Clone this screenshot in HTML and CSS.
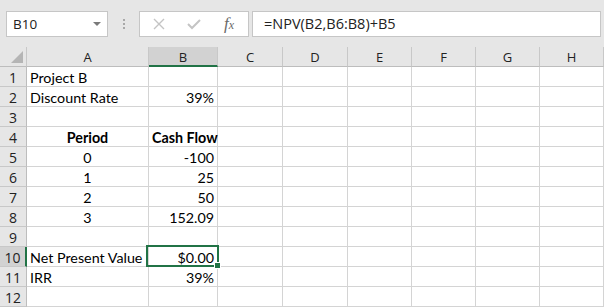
FILE: index.html
```html
<!DOCTYPE html>
<html lang="en">
<head>
    <meta charset="UTF-8">
    <title>NPV - Excel</title>
    <link rel="stylesheet" href="styles.css">
</head>
<body>
    <div class="formula-bar">
        <div class="name-box">
            <span>B10</span>
            <span class="drop-arrow"></span>
        </div>
        <div class="grip"><i></i><i></i><i></i></div>
        <div class="fx-buttons">
            <svg class="btn-icon" width="12" height="12" viewBox="0 0 12 12">
                <path d="M1 1 L11 11 M11 1 L1 11" stroke="#c4c4c4" stroke-width="1.4" fill="none"/>
            </svg>
            <svg class="btn-icon" width="14" height="12" viewBox="0 0 14 12">
                <path d="M1 6 L5 10 L13 2" stroke="#c4c4c4" stroke-width="2" fill="none"/>
            </svg>
            <span class="fx">f<sub>x</sub></span>
        </div>
        <div class="formula-input">=NPV(B2,B6:B8)+B5</div>
    </div>

    <div class="sheet">
        <div class="hd corner"><span class="corner-tri"></span></div>
        <div class="hd">A</div>
        <div class="hd active-col">B</div>
        <div class="hd">C</div>
        <div class="hd">D</div>
        <div class="hd">E</div>
        <div class="hd">F</div>
        <div class="hd">G</div>
        <div class="hd">H</div>

        <div class="rh">1</div><div class="c">Project B</div><div class="c"></div><div class="c"></div><div class="c"></div><div class="c"></div><div class="c"></div><div class="c"></div><div class="c"></div>
        <div class="rh">2</div><div class="c">Discount Rate</div><div class="c num">39%</div><div class="c"></div><div class="c"></div><div class="c"></div><div class="c"></div><div class="c"></div><div class="c"></div>
        <div class="rh">3</div><div class="c"></div><div class="c"></div><div class="c"></div><div class="c"></div><div class="c"></div><div class="c"></div><div class="c"></div><div class="c"></div>
        <div class="rh">4</div><div class="c mid bold">Period</div><div class="c mid bold">Cash Flow</div><div class="c"></div><div class="c"></div><div class="c"></div><div class="c"></div><div class="c"></div><div class="c"></div>
        <div class="rh">5</div><div class="c mid">0</div><div class="c num">-100</div><div class="c"></div><div class="c"></div><div class="c"></div><div class="c"></div><div class="c"></div><div class="c"></div>
        <div class="rh">6</div><div class="c mid">1</div><div class="c num">25</div><div class="c"></div><div class="c"></div><div class="c"></div><div class="c"></div><div class="c"></div><div class="c"></div>
        <div class="rh">7</div><div class="c mid">2</div><div class="c num">50</div><div class="c"></div><div class="c"></div><div class="c"></div><div class="c"></div><div class="c"></div><div class="c"></div>
        <div class="rh">8</div><div class="c mid">3</div><div class="c num">152.09</div><div class="c"></div><div class="c"></div><div class="c"></div><div class="c"></div><div class="c"></div><div class="c"></div>
        <div class="rh">9</div><div class="c"></div><div class="c"></div><div class="c"></div><div class="c"></div><div class="c"></div><div class="c"></div><div class="c"></div><div class="c"></div>
        <div class="rh active-row">10</div><div class="c">Net Present Value</div><div class="c num selected">$0.00</div><div class="c"></div><div class="c"></div><div class="c"></div><div class="c"></div><div class="c"></div><div class="c"></div>
        <div class="rh">11</div><div class="c">IRR</div><div class="c num">39%</div><div class="c"></div><div class="c"></div><div class="c"></div><div class="c"></div><div class="c"></div><div class="c"></div>
        <div class="rh">12</div><div class="c"></div><div class="c"></div><div class="c"></div><div class="c"></div><div class="c"></div><div class="c"></div><div class="c"></div><div class="c"></div>
    </div>
</body>
</html>
```

FILE: styles.css
```css
body {
  margin: 0;
  padding: 0;
  background: #ffffff;
  font-family: Lato, "Liberation Sans", sans-serif;
  color: #000;
  width: 604px;
  height: 307px;
  overflow: hidden;
}

.formula-bar {
  height: 47px;
  background: #e6e6e6;
  display: flex;
  align-items: flex-start;
  padding: 11px 3px 0 6px;
  box-sizing: border-box;
}

.name-box {
  width: 102px;
  height: 26px;
  box-sizing: border-box;
  background: #fff;
  border: 1px solid #c6c6c6;
  display: flex;
  align-items: center;
  justify-content: space-between;
  padding: 0 6px 0 6px;
  font-family: "Open Sans", "Liberation Sans", sans-serif;
  font-size: 13.5px;
  color: #222;
}

.drop-arrow {
  width: 0;
  height: 0;
  border-left: 4px solid transparent;
  border-right: 4px solid transparent;
  border-top: 4px solid #7a7a7a;
}

.grip {
  width: 31px;
  display: flex;
  flex-direction: column;
  align-items: center;
  gap: 2px;
  padding-top: 8px;
}

.grip i {
  display: block;
  width: 2px;
  height: 2px;
  background: #a8a8a8;
}

.fx-buttons {
  width: 110px;
  height: 26px;
  box-sizing: border-box;
  background: #fff;
  border: 1px solid #c6c6c6;
  display: flex;
  align-items: center;
  padding: 0 10px 0 13px;
  gap: 22px;
}

.fx {
  font-family: "Liberation Serif", serif;
  font-style: italic;
  font-size: 17px;
  color: #6a6a6a;
  margin-left: 1px;
}

.fx sub {
  font-size: 12px;
  vertical-align: 0;
}

.formula-input {
  flex: 1;
  margin-left: 3px;
  height: 26px;
  box-sizing: border-box;
  background: #fff;
  border: 1px solid #c6c6c6;
  padding: 2px 0 0 11px;
  font-family: "Open Sans", "Liberation Sans", sans-serif;
  font-size: 14.5px;
  color: #222;
}

.sheet {
  display: grid;
  grid-template-columns: 27px 122px 69px 65px 65px 64px 64px 64px 64px;
  grid-auto-rows: 20px;
  font-size: 14.3px;
}

.sheet > div {
  box-sizing: border-box;
  border-right: 1px solid #d4d4d4;
  border-bottom: 1px solid #d4d4d4;
  white-space: nowrap;
  line-height: 19px;
  padding: 1px 3px 0 3px;
}

.sheet .hd {
  background: #e6e6e6;
  border-right-color: #c8c8c8;
  border-bottom-color: #bdbdbd;
  text-align: center;
  font-family: "Open Sans", "Liberation Sans", sans-serif;
  font-size: 13px;
  color: #222;
}

.sheet .corner {
  position: relative;
}

.corner-tri {
  position: absolute;
  right: 3px;
  bottom: 3px;
  width: 0;
  height: 0;
  border-left: 12px solid transparent;
  border-bottom: 12px solid #b5b5b5;
}

.sheet .active-col {
  background: #d2d2d2;
  border-bottom: 2px solid #217346;
}

.sheet .rh {
  background: #e6e6e6;
  border-right-color: #bdbdbd;
  border-bottom-color: #c8c8c8;
  text-align: center;
  font-family: "Open Sans", "Liberation Sans", sans-serif;
  font-size: 14px;
  color: #222;
  padding: 1px 0 0 0;
}

.sheet .active-row {
  background: #d2d2d2;
  border-right: 2px solid #217346;
}

.num {
  text-align: right;
}

.mid {
  text-align: center;
}

.bold {
  font-weight: bold;
}

.sheet .selected {
  position: relative;
  overflow: visible;
}

.selected::before {
  content: "";
  position: absolute;
  left: -3px;
  top: -2px;
  right: -2px;
  bottom: -1px;
  border: 2px solid #217346;
}

.selected::after {
  content: "";
  position: absolute;
  right: -4px;
  bottom: -3px;
  width: 5px;
  height: 5px;
  background: #217346;
  border: 1px solid #fff;
}
```
